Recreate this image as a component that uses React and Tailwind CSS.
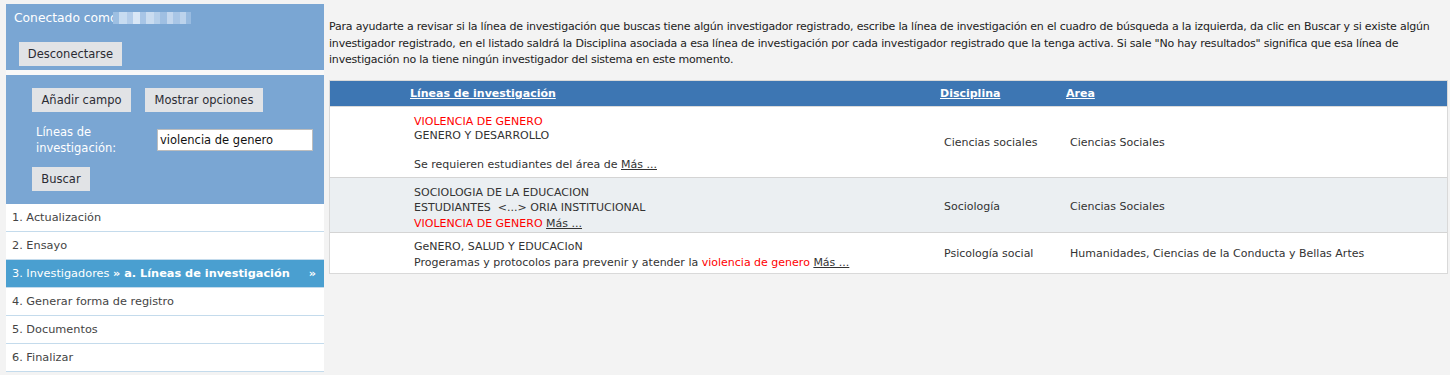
import React from "react";

const menu = [
  "1. Actualización",
  "2. Ensayo",
  null,
  "4. Generar forma de registro",
  "5. Documentos",
  "6. Finalizar",
];

function Btn({ children, className = "" }) {
  return (
    <button
      className={
        "h-6 bg-[#e1e3e6] text-[#2b2b33] text-[11.5px] leading-6 whitespace-nowrap text-center " +
        className
      }
    >
      {children}
    </button>
  );
}

function Mas() {
  return <span className="underline text-[#333]">Más ...</span>;
}

const cols = "grid grid-cols-[80px_530px_126px_1fr]";

export default function App() {
  return (
    <div className="min-h-[375px] w-[1450px] bg-[#f3f3f3] flex pt-1 pl-1.5 pr-[2px] font-['DejaVu_Sans',sans-serif] text-[#333]">
      <aside className="w-[318px] shrink-0 flex flex-col gap-[5px] bg-[#f8f8f8] self-start">
        <div className="h-[66px] bg-[#7aa6d3] px-2 pt-[6px]">
          <div className="flex items-center text-white text-[12.3px] leading-4 h-4 whitespace-nowrap">
            <span>Conectado como</span>
            <span className="flex h-3 -ml-[5px]">
              <span className="w-[6px] bg-[#9dbfe2]" />
              <span className="w-[8px] bg-[#c7dcf1]" />
              <span className="w-[6px] bg-[#b3cdea]" />
              <span className="w-[7px] bg-[#d9e7f6]" />
              <span className="w-[6px] bg-[#a7c5e6]" />
              <span className="w-[8px] bg-[#c9dcf0]" />
              <span className="w-[6px] bg-[#b5cfea]" />
              <span className="w-[7px] bg-[#9fbfe2]" />
              <span className="w-[6px] bg-[#c3d7ee]" />
              <span className="w-[7px] bg-[#a9c6e6]" />
              <span className="w-[6px] bg-[#bcd3ec]" />
              <span className="w-[5px] bg-[#98bbe0]" />
            </span>
          </div>
          <div className="mt-[15px] pl-[5px]">
            <Btn className="w-[103px]">Desconectarse</Btn>
          </div>
        </div>
        <div className="h-[129px] bg-[#7aa6d3] pl-[26px] pt-[13px]">
          <div className="flex gap-[14px]">
            <Btn className="w-[99px]">Añadir campo</Btn>
            <Btn className="w-[118px]">Mostrar opciones</Btn>
          </div>
          <div className="flex mt-[12px] items-center">
            <div className="w-[125px] pl-[4px] text-white text-[11.5px] leading-4">
              Líneas de
              <br />
              investigación:
            </div>
            <input
              readOnly
              value="violencia de genero"
              className="w-[156px] h-[22px] bg-white border border-[#bdbdbd] px-[2px] text-[11.5px] text-[#111] outline-none"
            />
          </div>
          <div className="mt-[10px]">
            <Btn className="w-[58px]">Buscar</Btn>
          </div>
        </div>
        <nav className="bg-white -mt-[5px]">
          {menu.map((m, i) =>
            m === null ? (
              <div
                key={i}
                className="h-[28px] bg-[#4a9fd0] border-b border-[#c4dbec] flex items-center justify-between pt-[2px] pl-[6px] pr-[8px] text-white text-[11.3px] whitespace-nowrap"
              >
                <span>
                  3. Investigadores{" "}
                  <span className="font-bold">
                    » a. Líneas de investigación
                  </span>
                </span>
                <span className="font-bold">»</span>
              </div>
            ) : (
              <div
                key={i}
                className="h-[28px] border-b border-[#c4dbec] flex items-center pt-[2px] pl-[6px] text-[11.3px] text-[#444] whitespace-nowrap"
              >
                {m}
              </div>
            )
          )}
        </nav>
      </aside>

      <main className="flex-1 pl-[5px] pt-[15px]">
        <p className="text-[11px] leading-[16.5px] tracking-[-0.2px] text-[#222] pr-[4px]">
          Para ayudarte a revisar si la línea de investigación que buscas tiene
          algún investigador registrado, escribe la línea de investigación en
          el cuadro de búsqueda a la izquierda, da clic en Buscar y si existe
          algún investigador registrado, en el listado saldrá la Disciplina
          asociada a esa línea de investigación por cada investigador
          registrado que la tenga activa. Si sale "No hay resultados" significa
          que esa línea de investigación no la tiene ningún investigador del
          sistema en este momento.
        </p>

        <div className="mt-[11px] border border-[#d9d9d9] bg-white text-[11px]">
          <div className={cols + " h-[25px] bg-[#3d76b3] items-center pt-[3px] text-white font-bold"}>
            <span />
            <span className="underline">Líneas de investigación</span>
            <span className="underline">Disciplina</span>
            <span className="underline">Area</span>
          </div>

          <div className={cols + " items-center border-t border-[#dadada] leading-[14.5px]"}>
            <span />
            <div className="pt-[8px] pb-[4px] pl-[4px]">
              <div className="text-[#ff0000]">VIOLENCIA DE GENERO</div>
              <div>GENERO Y DESARROLLO</div>
              <div>&nbsp;</div>
              <div>
                Se requieren estudiantes del área de <Mas />
              </div>
            </div>
            <div className="pl-[4px] pt-[3px]">Ciencias sociales</div>
            <div className="pl-[4px] pt-[3px]">Ciencias Sociales</div>
          </div>

          <div className={cols + " items-center border-t border-[#d4d4d4] bg-[#ebeff2] leading-[15.5px]"}>
            <span />
            <div className="pt-[7px] pb-[1px] pl-[4px]">
              <div>SOCIOLOGIA DE LA EDUCACION</div>
              <div>ESTUDIANTES&nbsp; &lt;...&gt; ORIA INSTITUCIONAL</div>
              <div>
                <span className="text-[#ff0000]">VIOLENCIA DE GENERO</span>{" "}
                <Mas />
              </div>
            </div>
            <div className="pl-[4px] pt-[3px]">Sociología</div>
            <div className="pl-[4px] pt-[3px]">Ciencias Sociales</div>
          </div>

          <div className={cols + " items-center border-t border-[#d4d4d4] leading-[16px]"}>
            <span />
            <div className="pt-[6px] pb-[2px] pl-[4px]">
              <div>GeNERO, SALUD Y EDUCACIoN</div>
              <div>
                Progeramas y protocolos para prevenir y atender la{" "}
                <span className="text-[#ff0000]">violencia de genero</span>{" "}
                <Mas />
              </div>
            </div>
            <div className="pl-[4px] pt-[2px]">Psicología social</div>
            <div className="pl-[4px] pt-[2px]">
              Humanidades, Ciencias de la Conducta y Bellas Artes
            </div>
          </div>
        </div>
      </main>
    </div>
  );
}
